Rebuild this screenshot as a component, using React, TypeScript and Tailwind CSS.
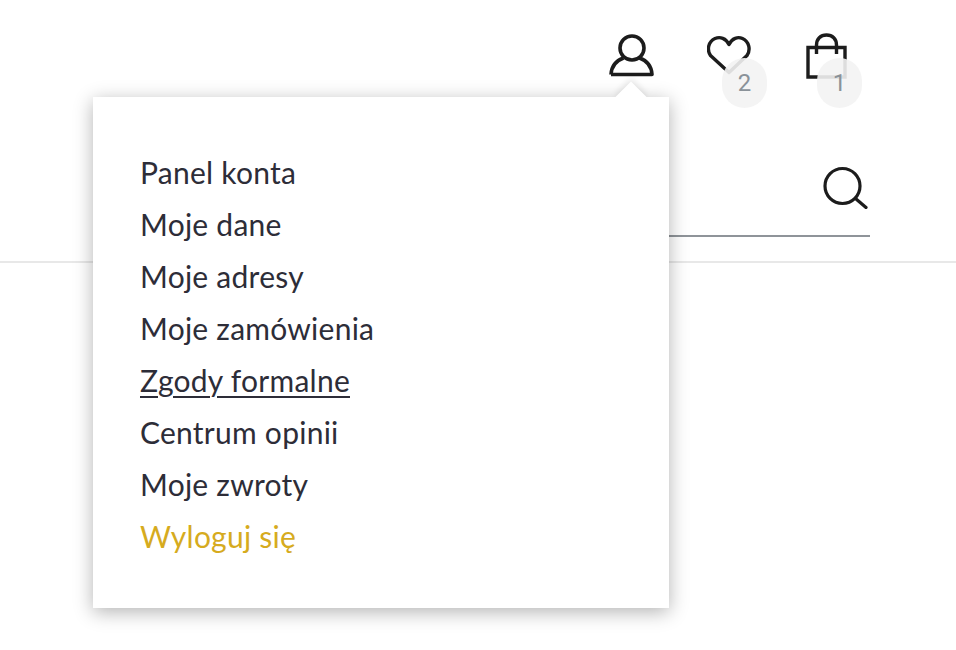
import React from 'react'

const links = ['Panel konta', 'Moje dane', 'Moje adresy', 'Moje zamówienia', 'Zgody formalne', 'Centrum opinii', 'Moje zwroty']

// small grey count bubble that sits over the header icons
function Badge({ count, className }: { count: number; className: string }) {
  return (
    <span className={`absolute top-[25px] flex h-[50px] w-[45px] items-center justify-center rounded-full bg-[#f3f3f3]/90 text-[24px] text-[#8a9299] font-['Roboto',sans-serif] ${className}`}>
      {count}
    </span>
  )
}

export default function App() {
  return (
    <div className="relative h-[650px] w-full overflow-hidden bg-white font-['Lato',sans-serif]">
      {/* Header icons */}
      <div className="flex justify-end pt-[33px] pr-[108px]">
        <svg className="h-[46px] w-[48px] shrink-0" viewBox="0 0 48 46" fill="none" stroke="#1c1c1c" strokeWidth="3.6">
          <circle cx="24" cy="15" r="12" />
          <path d="M3 41.500h41c-.5-8.500-5.500-14-12.500-16.500M3 41.500c.5-8.500 5.500-14 12.500-16.500" strokeLinejoin="round" />
        </svg>
        <div className="relative ml-[51px] h-[46px] w-[46px]">
          <svg className="h-[46px] w-[46px]" viewBox="0 0 46 46" fill="none" stroke="#1c1c1c" strokeWidth="3.4">
            <path d="M22 11.500C19 5 13 3.500 8 5.500 1.500 8.500-.5 16.500 3.500 22.500L22 39.500l18-17c4-6 2-14-4.500-17C31 3.500 25 5 22 11.500z" strokeLinejoin="round" />
          </svg>
          <Badge count={2} className="left-[15px]" />
        </div>
        <div className="relative ml-[53px] h-[46px] w-[42px]">
          <svg className="h-[46px] w-[42px]" viewBox="0 0 42 46" fill="none" stroke="#1c1c1c" strokeWidth="3.4">
            <path d="M2 14.500h37v29.500h-37z" />
            <path d="M10.500 21v-9c0-6 4-10 10-10s10 4 10 10v9" />
          </svg>
          <Badge count={1} className="left-[11px]" />
        </div>
      </div>

      {/* Search row */}
      <div className="flex justify-end pr-[86px]">
        <div className="flex h-[158px] w-[400px] items-end justify-end border-b-2 border-[#8f9499] pr-[2px] pb-[26px]">
          <svg className="h-[44px] w-[46px]" viewBox="0 0 46 44" fill="none" stroke="#1c1c1c" strokeWidth="3.2">
            <circle cx="20.500" cy="21" r="17.500" />
            <path d="M33.500 33.500l10.500 9" strokeLinecap="round" />
          </svg>
        </div>
      </div>
      <div className="mt-[24px] h-[2px] bg-[#e8e8e8]" />

      {/* Account dropdown */}
      <div className="absolute top-[97px] left-[93px] w-[576px] bg-white pt-[49px] pb-[46px] pl-[47px] shadow-[0_4px_18px_rgba(0,0,0,0.3)]">
        <div className="absolute top-[-11px] left-[527px] h-[22px] w-[22px] rotate-45 bg-white shadow-[-2px_-2px_6px_rgba(0,0,0,0.1)]" />
        <div className="absolute inset-x-0 top-0 h-[20px] bg-white" />
        <ul className="relative flex flex-col tracking-[0.25px]">
          {links.map((label) => (
            <li key={label} className="flex h-[52px] items-center text-[30px] text-[#2d2d38]">
              <a className={label === 'Zgody formalne' ? 'underline decoration-2 underline-offset-4' : ''}>{label}</a>
            </li>
          ))}
          <li className="flex h-[52px] items-center text-[30px] text-[#d6ab1e]">
            <a>Wyloguj się</a>
          </li>
        </ul>
      </div>
    </div>
  )
}
